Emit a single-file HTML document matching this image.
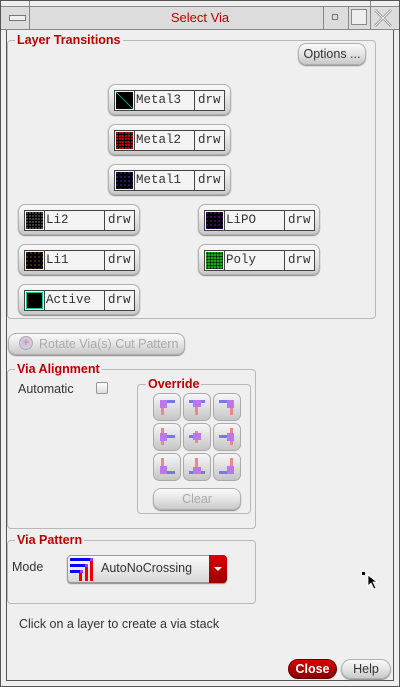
<html><head><style>
*{box-sizing:border-box}
body{margin:0;width:400px;height:687px;background:#efefef;position:relative;overflow:hidden;font-family:"Liberation Sans",sans-serif;font-size:12px;color:#333}
.a{position:absolute}
.fs{position:absolute;border:1px solid #b8b8b8;border-radius:4px}
.lg{position:absolute;background:#efefef;color:#c00000;font-weight:bold;font-size:12.5px;padding:0 2px;line-height:14px}
.btn{position:absolute;border-radius:7px;background:linear-gradient(#fafafa,#e4e4e4 50%,#c9c9c9);border:1px solid #b0b0b0;box-shadow:0 1px 1px #888}
.lb{position:absolute;left:5px;top:5px;width:111px;height:21px;border:1px solid #444;background:#f4f4f4;font-family:"Liberation Mono",monospace;font-size:12.5px;line-height:19px}
.sw{position:absolute;left:0;top:0;width:20px;height:19px;border-right:1px solid #444;padding:1px}
.sw div{width:100%;height:100%}
.nm{position:absolute;left:21px;top:0}
.dr{position:absolute;left:79px;top:0;width:31px;height:19px;border-left:1px solid #444;padding-left:3px}
</style></head><body>
<div class="a" style="left:0;top:0;width:400px;height:687px;border:1px solid #555"></div>
<div class="a" style="left:6px;top:29px;width:388px;height:652px;border:1px solid #555;border-top:1px solid #999"></div>
<div class="a" style="left:1px;top:6px;width:398px;height:24px;background:#dcdcdc;border-top:1px solid #888;border-bottom:1px solid #888"></div>
<div class="a" style="left:29px;top:1px;width:1px;height:29px;background:#888"></div>
<div class="a" style="left:323px;top:6px;width:1px;height:24px;background:#888"></div>
<div class="a" style="left:348px;top:6px;width:1px;height:24px;background:#888"></div>
<div class="a" style="left:370px;top:1px;width:1px;height:29px;background:#888"></div>
<div class="a" style="left:9px;top:15px;width:17px;height:6px;border:1px solid #777;background:#eee"></div>
<div class="a" style="left:332px;top:14px;width:6px;height:6px;border:1px solid #777"></div>
<div class="a" style="left:351px;top:9px;width:16px;height:16px;border:1px solid #888;background:#eee"></div>
<svg class="a" style="left:373px;top:8px" width="20" height="20"><path d="M2 2L18 18M18 2L2 18" stroke="#888" stroke-width="2.5"/><path d="M2 2L18 18M18 2L2 18" stroke="#f4f4f4" stroke-width="1"/></svg>
<div class="a" style="left:0;top:10px;width:400px;text-align:center;color:#c00000;font-size:13px">Select Via</div>

<div class="fs" style="left:7px;top:40px;width:369px;height:279px"></div>
<div class="lg" style="left:15px;top:33px">Layer Transitions</div>
<div class="btn" style="left:298px;top:43px;width:68px;height:22px;border-radius:8px;font-size:12.5px;line-height:20px;text-align:center">Options ...</div>

<div class="btn" style="left:108px;top:84px;width:123px;height:31px"><div class="lb"><div class="sw"><div style="background:linear-gradient(45deg,#000 47%,#1c8 50%,#000 53%)"></div></div><span class="nm">Metal3</span><span class="dr">drw</span></div></div>
<div class="btn" style="left:108px;top:124px;width:123px;height:31px"><div class="lb"><div class="sw"><div style="background:#000 radial-gradient(circle at 1px 1px,#e00 0.9px,transparent 1.1px) 0 0/3px 3px"></div></div><span class="nm">Metal2</span><span class="dr">drw</span></div></div>
<div class="btn" style="left:108px;top:164px;width:123px;height:31px"><div class="lb"><div class="sw"><div style="background:#000 radial-gradient(circle at 1px 1px,#33a 0.7px,transparent 0.9px) 0 0/4px 4px"></div></div><span class="nm">Metal1</span><span class="dr">drw</span></div></div>
<div class="btn" style="left:18px;top:204px;width:122px;height:31px"><div class="lb"><div class="sw"><div style="background:#000 radial-gradient(circle at 1px 1px,#ddd 0.6px,transparent 0.8px) 0 0/3px 3px"></div></div><span class="nm">Li2</span><span class="dr">drw</span></div></div>
<div class="btn" style="left:198px;top:204px;width:122px;height:31px"><div class="lb"><div class="sw"><div style="background:#000 radial-gradient(circle at 1px 1px,#80c 0.7px,transparent 0.9px) 0 0/4px 4px"></div></div><span class="nm">LiPO</span><span class="dr">drw</span></div></div>
<div class="btn" style="left:18px;top:244px;width:122px;height:31px"><div class="lb"><div class="sw"><div style="background:#000 radial-gradient(circle at 1px 1px,#e80 0.6px,transparent 0.8px) 0 0/4px 4px"></div></div><span class="nm">Li1</span><span class="dr">drw</span></div></div>
<div class="btn" style="left:198px;top:244px;width:122px;height:31px"><div class="lb"><div class="sw"><div style="background:#1a1 radial-gradient(circle at 1.5px 1.5px,#000 0.8px,transparent 1px) 0 0/3px 3px"></div></div><span class="nm">Poly</span><span class="dr">drw</span></div></div>
<div class="btn" style="left:18px;top:284px;width:122px;height:31px"><div class="lb"><div class="sw"><div style="background:#000;border:1px solid #1c8"></div></div><span class="nm">Active</span><span class="dr">drw</span></div></div>

<div class="btn" style="left:8px;top:333px;width:177px;height:22px;border-radius:8px;color:#aaa;font-size:12.5px;line-height:20px;padding-left:30px">Rotate Via(s) Cut Pattern</div>
<div class="a" style="left:19px;top:336px;width:14px;height:14px;border-radius:50%;background:#ccd;border:1px solid #aab"><div style="color:#e88;font-size:11px;line-height:12px;text-align:center;font-weight:bold">+</div></div>

<div class="fs" style="left:7px;top:369px;width:249px;height:160px"></div>
<div class="lg" style="left:15px;top:362px">Via Alignment</div>
<div class="a" style="left:18px;top:382px;font-size:12.5px">Automatic</div>
<div class="a" style="left:96px;top:382px;width:12px;height:12px;border:1px solid #999;border-radius:2px;background:linear-gradient(#fff,#ddd)"></div>
<div class="fs" style="left:137px;top:384px;width:114px;height:130px"></div>
<div class="lg" style="left:146px;top:377px">Override</div>
<svg class="a" style="left:153px;top:393px" width="90" height="90">
<defs><linearGradient id="bg" x1="0" y1="0" x2="0" y2="1"><stop offset="0" stop-color="#f8f8f8"/><stop offset="1" stop-color="#c4c4c4"/></linearGradient>
<g id="c"><rect x="0.5" y="0.5" width="27" height="27" rx="6" stroke="#aaa" fill="url(#bg)"/></g></defs>
<use href="#c"/><use href="#c" x="30"/><use href="#c" x="60"/>
<use href="#c" y="30"/><use href="#c" x="30" y="30"/><use href="#c" x="60" y="30"/>
<use href="#c" y="60"/><use href="#c" x="30" y="60"/><use href="#c" x="60" y="60"/>
<g transform="translate(0,0)"><rect x="8" y="7" width="3" height="15" fill="#e88"/><rect x="7" y="7" width="15" height="3" fill="#77e"/><rect x="7" y="7" width="7" height="8" fill="#b7e"/></g>
<g transform="translate(30,0)"><rect x="12" y="7" width="3" height="15" fill="#e88"/><rect x="6" y="7" width="16" height="3" fill="#77e"/><rect x="10" y="7" width="8" height="7" fill="#b7e"/></g>
<g transform="translate(60,0)"><rect x="17" y="7" width="3" height="15" fill="#e88"/><rect x="6" y="7" width="15" height="3" fill="#77e"/><rect x="14" y="7" width="7" height="8" fill="#b7e"/></g>
<g transform="translate(0,30)"><rect x="8" y="5" width="3" height="17" fill="#e88"/><rect x="7" y="12" width="15" height="3" fill="#77e"/><rect x="7" y="10" width="7" height="8" fill="#b7e"/></g>
<g transform="translate(30,30)"><rect x="12" y="8" width="3" height="12" fill="#e88"/><rect x="6" y="12" width="12" height="3" fill="#77e"/><rect x="10" y="10" width="8" height="7" fill="#b7e"/></g>
<g transform="translate(60,30)"><rect x="17" y="5" width="3" height="17" fill="#e88"/><rect x="6" y="12" width="15" height="3" fill="#77e"/><rect x="14" y="10" width="7" height="8" fill="#b7e"/></g>
<g transform="translate(0,60)"><rect x="8" y="5" width="3" height="16" fill="#e88"/><rect x="7" y="18" width="15" height="3" fill="#77e"/><rect x="7" y="13" width="7" height="8" fill="#b7e"/></g>
<g transform="translate(30,60)"><rect x="12" y="5" width="3" height="16" fill="#e88"/><rect x="6" y="18" width="16" height="3" fill="#77e"/><rect x="10" y="14" width="8" height="7" fill="#b7e"/></g>
<g transform="translate(60,60)"><rect x="17" y="5" width="3" height="16" fill="#e88"/><rect x="6" y="18" width="15" height="3" fill="#77e"/><rect x="14" y="13" width="7" height="8" fill="#b7e"/></g>
</svg>
<div class="btn" style="left:153px;top:488px;width:88px;height:22px;border-radius:8px;color:#aaa;font-size:12.5px;line-height:20px;text-align:center">Clear</div>

<div class="fs" style="left:7px;top:540px;width:249px;height:64px"></div>
<div class="lg" style="left:15px;top:533px">Via Pattern</div>
<div class="a" style="left:12px;top:560px;font-size:12.5px">Mode</div>
<div class="a" style="left:67px;top:555px;width:160px;height:28px;border:1px solid #999;border-radius:4px;background:linear-gradient(#fafafa,#d8d8d8);box-shadow:0 1px 1px #888"></div>
<svg class="a" style="left:69px;top:557px" width="26" height="24"><g fill="#00f"><rect x="1" y="1" width="22" height="3"/><rect x="1" y="7" width="18" height="3"/><rect x="1" y="13" width="13" height="3"/></g><g fill="#e00"><rect x="10" y="16" width="3" height="8"/><rect x="16" y="10" width="3" height="14"/><rect x="21" y="4" width="3" height="20"/></g><g fill="#a3f"><rect x="21" y="1" width="3" height="3"/><rect x="16" y="7" width="3" height="3"/><rect x="11" y="13" width="3" height="3"/></g></svg>
<div class="a" style="left:101px;top:561px;font-size:12.5px">AutoNoCrossing</div>
<div class="a" style="left:209px;top:555px;width:18px;height:28px;background:linear-gradient(#d00,#900);border-radius:0 4px 4px 0"></div>
<div class="a" style="left:214px;top:567px;border:4px solid transparent;border-top:4px solid #fff;border-bottom:0"></div>

<div class="a" style="left:19px;top:617px;font-size:12.5px">Click on a layer to create a via stack</div>
<div class="a" style="left:362px;top:572px;width:3px;height:3px;background:#000"></div>
<svg class="a" style="left:367px;top:574px" width="12" height="16"><path d="M1 1L1 12L4 9L7 15L9 14L6 8L10 8Z" fill="#000" stroke="#fff" stroke-width="0.8"/></svg>

<div class="a" style="left:288px;top:659px;width:49px;height:20px;border-radius:10px;background:linear-gradient(#d00,#800);border:1px solid #600;color:#fff;font-weight:bold;font-size:12.5px;line-height:18px;text-align:center">Close</div>
<div class="btn" style="left:341px;top:659px;width:50px;height:20px;border-radius:10px;font-size:12.5px;line-height:18px;text-align:center">Help</div>
</body></html>
